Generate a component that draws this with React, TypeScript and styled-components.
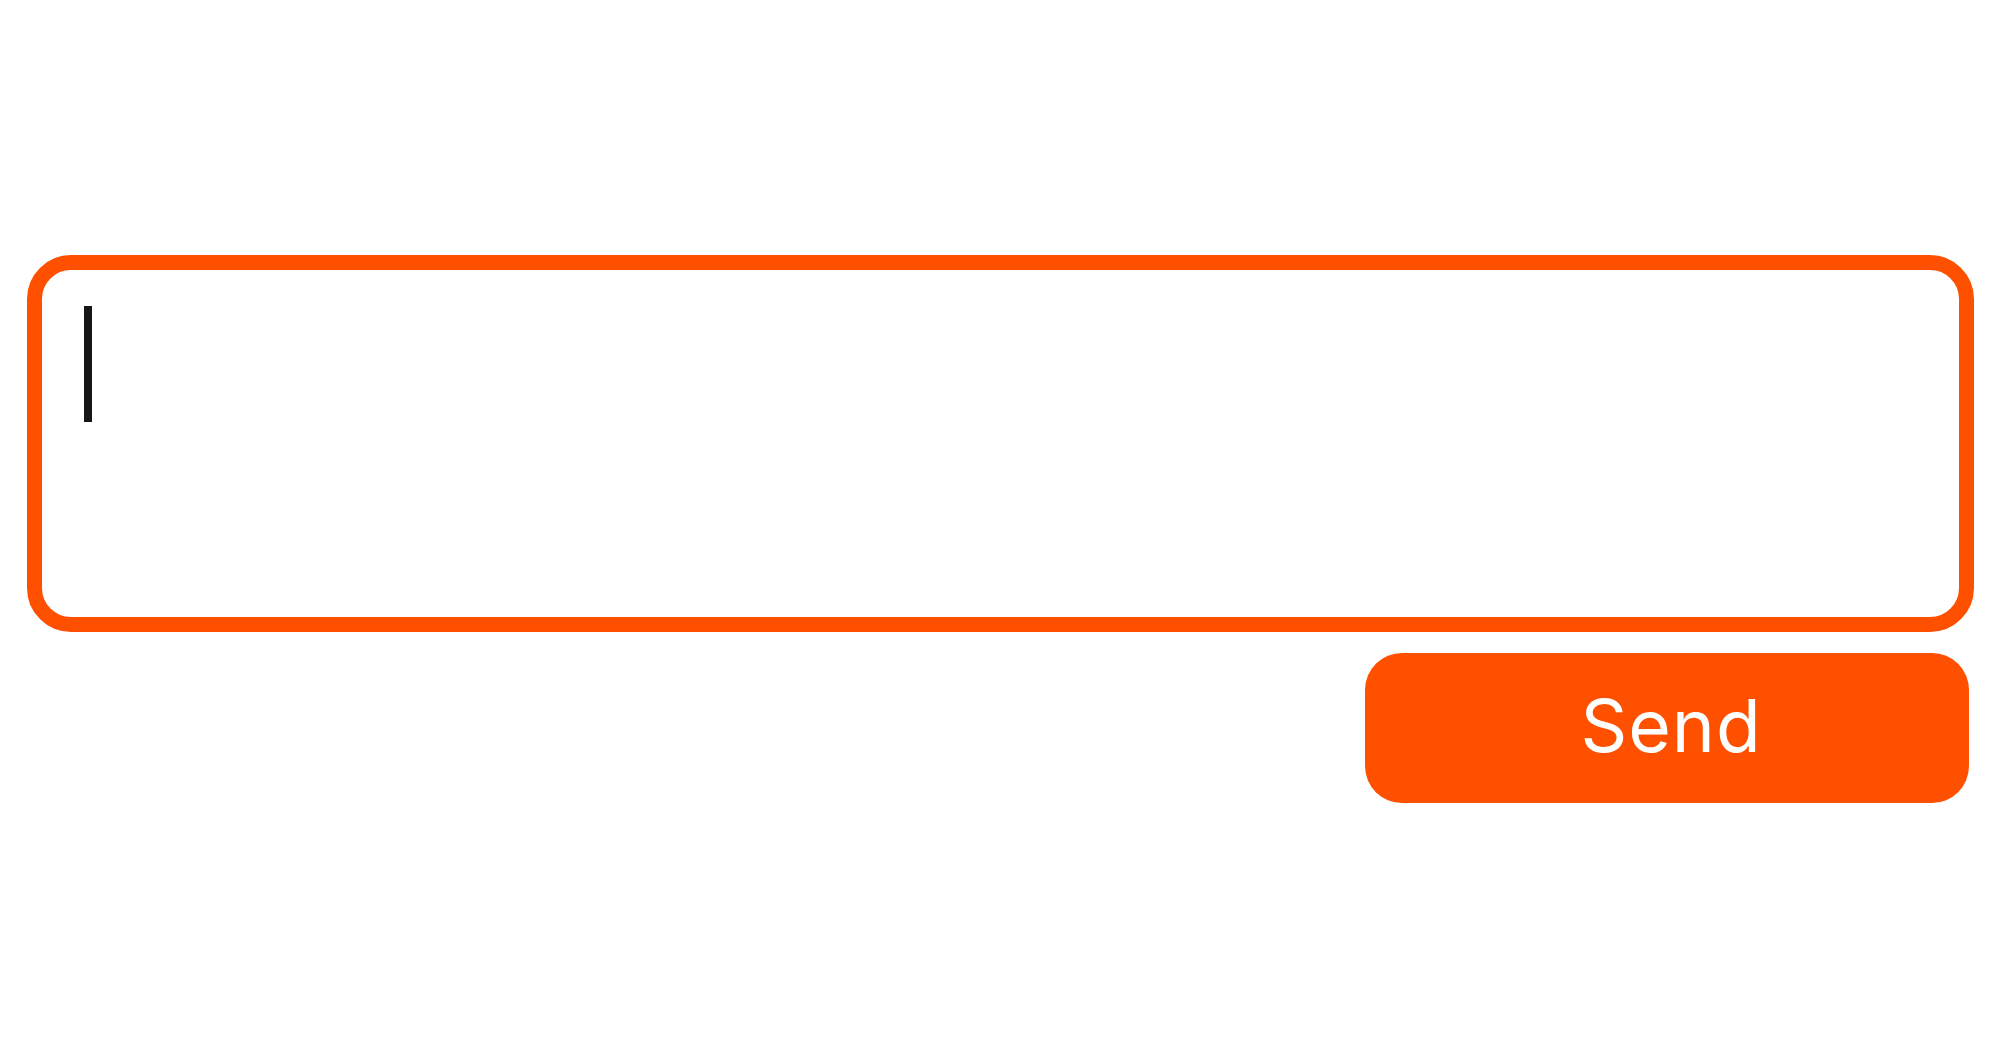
import React from 'react';
import styled, { createGlobalStyle } from 'styled-components';

const GlobalStyle = createGlobalStyle`
  html, body {
    margin: 0;
    padding: 0;
    background: #ffffff;
    font-family: Inter, "Liberation Sans", Arial, sans-serif;
  }
`;

const accent = '#ff5000';

export default function App() {
  return (
    <>
      <GlobalStyle />
      <Page>
        <Composer>
          <MessageBox aria-label='Message'>
            <Caret />
          </MessageBox>
          <Actions>
            <SendButton type='button'>Send</SendButton>
          </Actions>
        </Composer>
      </Page>
    </>
  );
}

const Page = styled.main`
  min-height: 100vh;
  display: flex;
  align-items: center;
  justify-content: center;
`;

const Composer = styled.div`
  width: 1947px;
  display: flex;
  flex-direction: column;
  gap: 21px;
`;

const MessageBox = styled.div`
  box-sizing: border-box;
  height: 377px;
  border: 15px solid ${accent};
  border-radius: 44px;
  padding: 36px 42px;
`;

const Caret = styled.span`
  display: block;
  width: 8px;
  height: 116px;
  background: #161616;
`;

const Actions = styled.div`
  display: flex;
  justify-content: flex-end;
  padding-right: 5px;
`;

const SendButton = styled.button`
  width: 604px;
  height: 150px;
  border: none;
  border-radius: 37px;
  background: ${accent};
  color: #ffffff;
  font-family: Inter, "Liberation Sans", Arial, sans-serif;
  font-size: 73px;
  font-weight: 400;
  letter-spacing: 1px;
  padding: 0 0 4px 9px;
  cursor: pointer;
`;
